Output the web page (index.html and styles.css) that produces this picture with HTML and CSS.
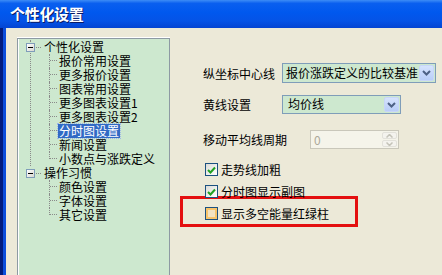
FILE: index.html
```html
<!DOCTYPE html>
<html>
<head>
  <meta charset="utf-8">
  <title>个性化设置</title>
  <link rel="stylesheet" href="styles.css">
</head>
<body>
  <div class="window">
    <div class="titlebar">个性化设置</div>
    <div class="frame">
      <div class="tree">
        <ul class="roots">
          <li class="root">
            <div class="node"><span class="toggle"></span><span class="dash"></span><span class="label">个性化设置</span></div>
            <ul class="children">
              <li><span class="label">报价常用设置</span></li>
              <li><span class="label">更多报价设置</span></li>
              <li><span class="label">图表常用设置</span></li>
              <li><span class="label">更多图表设置1</span></li>
              <li><span class="label">更多图表设置2</span></li>
              <li><span class="label selected">分时图设置</span></li>
              <li><span class="label">新闻设置</span></li>
              <li><span class="label">小数点与涨跌定义</span></li>
            </ul>
          </li>
          <li class="root">
            <div class="node"><span class="toggle"></span><span class="dash"></span><span class="label">操作习惯</span></div>
            <ul class="children">
              <li><span class="label">颜色设置</span></li>
              <li><span class="label">字体设置</span></li>
              <li><span class="label">其它设置</span></li>
            </ul>
          </li>
        </ul>
      </div>

      <div class="options">
        <div class="field first">
          <span class="field-label">纵坐标中心线</span>
          <div class="combo wide">
            <span class="combo-text">报价涨跌定义的比较基准</span>
            <span class="combo-btn"><svg width="9" height="6" viewBox="0 0 9 6"><polyline points="1,1 4.5,4.5 8,1" fill="none" stroke="#4d6185" stroke-width="2"/></svg></span>
          </div>
        </div>
        <div class="field second">
          <span class="field-label">黄线设置</span>
          <div class="combo narrow">
            <span class="combo-text top">均价线</span>
            <span class="combo-btn"><svg width="9" height="6" viewBox="0 0 9 6"><polyline points="1,1 4.5,4.5 8,1" fill="none" stroke="#4d6185" stroke-width="2"/></svg></span>
          </div>
        </div>
        <div class="field third">
          <span class="field-label long">移动平均线周期</span>
          <div class="spin">
            <span class="spin-text">0</span>
            <span class="spin-btns">
              <span class="spin-btn"><svg width="7" height="4" viewBox="0 0 7 4"><polyline points="0.5,3.5 3.5,0.5 6.5,3.5" fill="none" stroke="#c4c3b8" stroke-width="1.5"/></svg></span>
              <span class="spin-btn"><svg width="7" height="4" viewBox="0 0 7 4"><polyline points="0.5,0.5 3.5,3.5 6.5,0.5" fill="none" stroke="#c4c3b8" stroke-width="1.5"/></svg></span>
            </span>
          </div>
        </div>

        <label class="check-row cb1"><span class="check checked"><svg width="9" height="8" viewBox="0 0 9 8"><polyline points="1,4 3.5,6.5 8,1.5" fill="none" stroke="#21a121" stroke-width="2"/></svg></span>走势线加粗</label>
        <label class="check-row cb2"><span class="check checked"><svg width="9" height="8" viewBox="0 0 9 8"><polyline points="1,4 3.5,6.5 8,1.5" fill="none" stroke="#21a121" stroke-width="2"/></svg></span>分时图显示副图</label>
        <div class="highlight">
          <label class="check-row"><span class="check hover"></span>显示多空能量红绿柱</label>
        </div>
      </div>
    </div>
  </div>
</body>
</html>
```

FILE: styles.css
```css
html, body {
  margin: 0;
  padding: 0;
}

body {
  width: 442px;
  height: 275px;
  overflow: hidden;
  font-family: "Noto Sans CJK SC", "DejaVu Sans", sans-serif;
  font-size: 12px;
  color: #000;
}

.window {
  width: 442px;
  height: 275px;
  display: flex;
  flex-direction: column;
  background-color: #ece9d8;
  border-left: 3px solid #001a7e;
  box-sizing: border-box;
}

.titlebar {
  height: 28px;
  line-height: 27px;
  margin-left: -3px;
  padding-left: 10px;
  color: #ffffff;
  font-size: 15px;
  font-weight: bold;
  letter-spacing: -0.3px;
  text-shadow: 1px 1px 0 #0a1a66;
  background: linear-gradient(#3d8cf6 0%, #0a5fef 12%, #0058ee 45%, #0553e6 75%, #0444d2 100%);
  flex-shrink: 0;
}

.frame {
  flex: 1;
  display: flex;
  padding: 10px 0 0 11px;
  border-left: 3px solid #0b4ddc;
  overflow: hidden;
}

/* tree */

.tree {
  width: 151px;
  height: 250px;
  flex-shrink: 0;
  background-color: #cde8cf;
  border: 1px solid #8d9aa3;
  box-shadow: 1px 0 0 #ffffff inset, 0 -1px 0 #ffffff;
}

.tree ul {
  list-style: none;
  margin: 0;
  padding: 0;
}

.roots {
  padding: 1px 0 0 12px !important;
}

.root {
  border-left: 1px dotted #8a8a8a;
}

.root:last-child {
  border-left: none;
  padding-left: 1px;
}

.node {
  height: 14px;
  display: flex;
  align-items: center;
}

.toggle {
  width: 7px;
  height: 7px;
  margin-left: -5px;
  border: 1px solid #7f9db9;
  background: linear-gradient(135deg, #ffffff, #d8d8d0);
  position: relative;
  flex-shrink: 0;
}

.toggle::after {
  content: "";
  position: absolute;
  left: 1px;
  top: 3px;
  width: 5px;
  height: 1px;
  background-color: #000;
}

.dash {
  width: 5px;
  margin: 0 2px 0 1px;
  border-top: 1px dotted #8a8a8a;
}

.label {
  line-height: 14px;
  padding: 0 1px;
  white-space: nowrap;
}

.selected {
  background-color: #316ac5;
  color: #ffffff;
  outline: 1px dotted #9fb8e6;
}

.children {
  margin-left: 18px !important;
}

.children li {
  height: 14px;
  display: flex;
  border-left: 1px dotted #8a8a8a;
}

.children li:last-child {
  border-left: none;
}

.children li::before {
  content: "";
  width: 7px;
  height: 7px;
  margin-right: 1px;
  border-bottom: 1px dotted #8a8a8a;
  box-sizing: border-box;
  flex-shrink: 0;
}

.children li:last-child::before {
  border-left: 1px dotted #8a8a8a;
  width: 8px;
}

/* options */

.options {
  flex: 1;
  padding: 25px 0 0 33px;
}

.field {
  display: flex;
  align-items: center;
}

.field.second {
  margin-top: 12px;
}

.field.third {
  margin-top: 16px;
}

.field-label {
  width: 79px;
  flex-shrink: 0;
  white-space: nowrap;
}

.field-label.long {
  width: 107px;
}

.combo {
  display: flex;
  align-items: stretch;
  border: 1px solid #7f9db9;
  background-color: #cde8cf;
  box-sizing: border-box;
  padding: 1px;
}

.combo.wide {
  width: 154px;
  height: 20px;
}

.combo.narrow {
  width: 119px;
  height: 19px;
}

.combo-text {
  flex: 1;
  line-height: 16px;
  padding-left: 2px;
  white-space: nowrap;
  overflow: hidden;
}

.combo-text.top {
  line-height: 13px;
  padding-left: 4px;
  overflow: visible;
}

.combo-btn {
  width: 15px;
  display: flex;
  align-items: center;
  justify-content: center;
  border: 1px solid #c7d6f8;
  border-radius: 2px;
  background: linear-gradient(#d6e3fd, #b8cdf8);
  box-sizing: border-box;
}

.spin {
  width: 89px;
  height: 19px;
  display: flex;
  border: 1px solid #c9c7ba;
  background-color: #f5f4ea;
  box-sizing: border-box;
  padding: 1px;
}

.spin-text {
  flex: 1;
  color: #aca899;
  line-height: 15px;
  padding-left: 2px;
}

.spin-btns {
  width: 15px;
  display: flex;
  flex-direction: column;
  gap: 1px;
}

.spin-btn {
  flex: 1;
  display: flex;
  align-items: center;
  justify-content: center;
  background-color: #f4f3ee;
  border: 1px solid #e2e1da;
  border-radius: 2px;
}

.check-row {
  display: flex;
  align-items: center;
  height: 13px;
  margin-left: 2px;
  white-space: nowrap;
}

.cb1 {
  margin-top: 14px;
}

.cb2 {
  margin-top: 9px;
}

.check {
  width: 11px;
  height: 11px;
  margin-right: 3px;
  border: 1px solid #1c5180;
  background: linear-gradient(135deg, #dcdcd7, #ffffff);
  display: flex;
  align-items: center;
  justify-content: center;
  flex-shrink: 0;
}

.check.hover {
  background: #f3e3c2;
  box-shadow: inset 0 0 0 2px #f8c46a;
}

.highlight {
  width: 150px;
  height: 17px;
  margin: -2px 0 0 -23px;
  border: 3px solid #e41010;
  padding-top: 8px;
  padding-left: 22px;
}

.highlight .check-row {
  margin-left: 0;
}
```
